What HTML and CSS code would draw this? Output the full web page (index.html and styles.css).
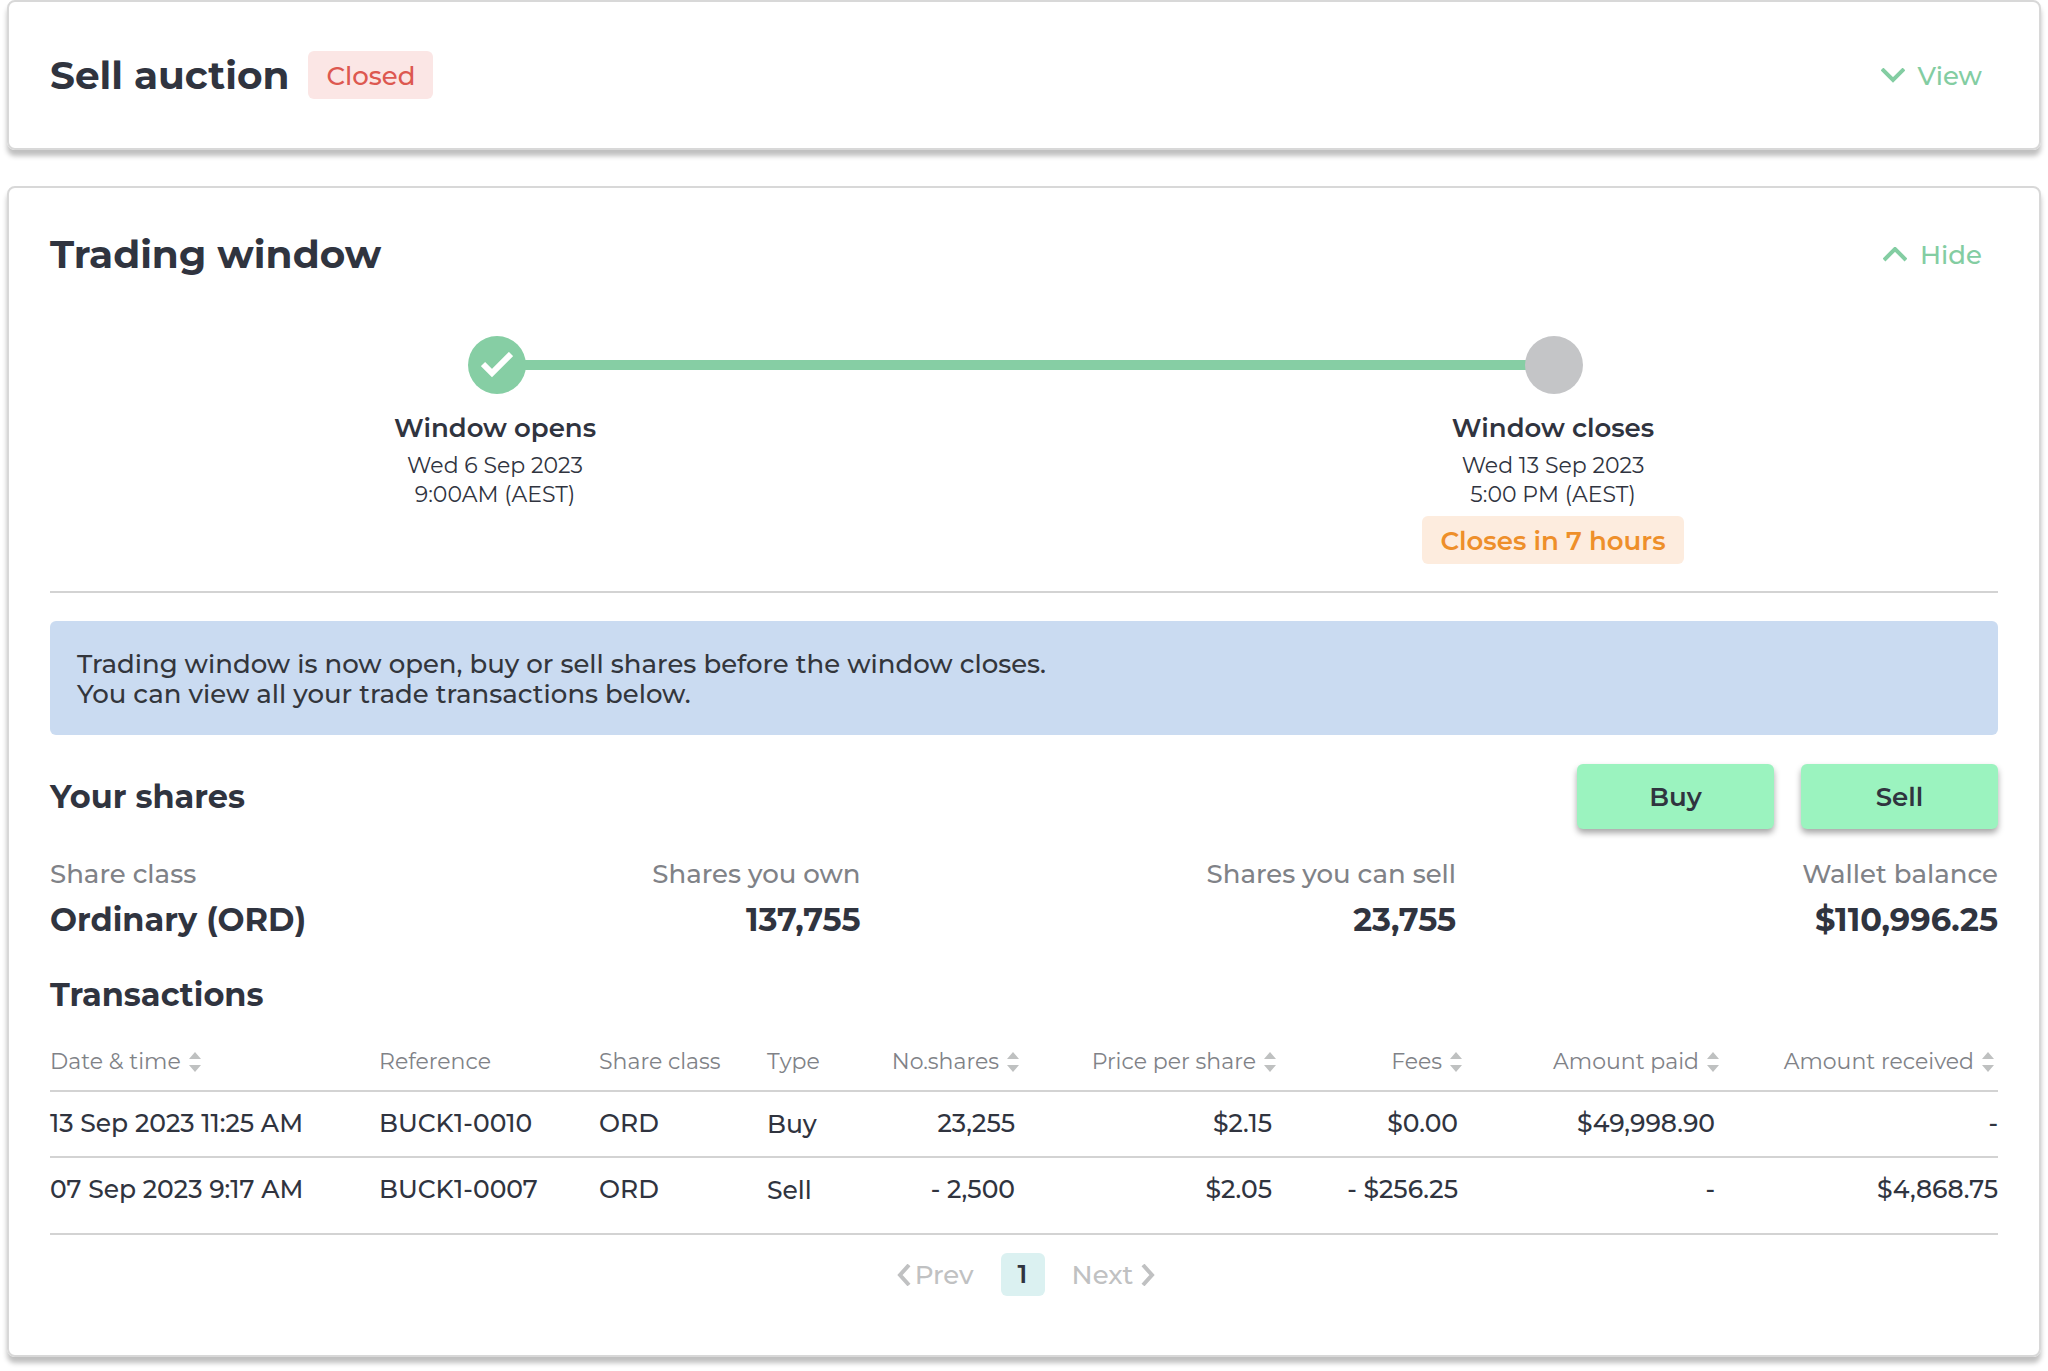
FILE: index.html
```html
<!DOCTYPE html>
<html lang="en">
<head>
<meta charset="utf-8">
<meta name="viewport" content="width=device-width, initial-scale=1">
<title>Trading window</title>
<link rel="stylesheet" href="styles.css">
</head>
<body>
<svg class="defs" width="0" height="0" aria-hidden="true">
  <symbol id="sort" viewBox="0 0 12 20"><path d="M6 0l6 7H0zM6 20l6-7H0z" fill="currentColor"/></symbol>
</svg>
<main class="page">
  <section class="card card-collapsed">
    <header class="card-header">
      <h1 class="title">Sell auction</h1>
      <span class="badge badge-closed">Closed</span>
      <button class="toggle" type="button" aria-expanded="false">
        <svg width="24" height="16" viewBox="0 0 24 16" aria-hidden="true"><path d="M1 1l11 11L23 1" fill="none" stroke="currentColor" stroke-width="4"/></svg>
        View
      </button>
    </header>
  </section>

  <section class="card card-open">
    <header class="card-header">
      <h1 class="title">Trading window</h1>
      <button class="toggle" type="button" aria-expanded="true">
        <svg width="24" height="16" viewBox="0 0 24 16" aria-hidden="true"><path d="M1 13L12 2l11 11" fill="none" stroke="currentColor" stroke-width="4"/></svg>
        Hide
      </button>
    </header>

    <div class="timeline">
      <div class="track">
        <span class="dot dot-done"><svg width="32" height="26" viewBox="0 0 32 26" aria-hidden="true"><path d="M2 12l9 9L30 2" fill="none" stroke="currentColor" stroke-width="6"/></svg></span>
        <span class="line"></span>
        <span class="dot"></span>
      </div>
      <div class="steps">
        <div class="step">
          <h2 class="step-title">Window opens</h2>
          <p class="step-date">Wed 6 Sep 2023<br>9:00AM (AEST)</p>
        </div>
        <div class="step">
          <h2 class="step-title">Window closes</h2>
          <p class="step-date">Wed 13 Sep 2023<br>5:00 PM (AEST)</p>
          <span class="badge badge-closing">Closes in 7 hours</span>
        </div>
      </div>
    </div>

    <p class="notice">Trading window is now open, buy or sell shares before the window closes.<br>You can view all your trade transactions below.</p>

    <div class="shares-header">
      <h2 class="subtitle">Your shares</h2>
      <button class="action" type="button">Buy</button>
      <button class="action" type="button">Sell</button>
    </div>

    <dl class="stats">
      <div class="stat"><dt>Share class</dt><dd>Ordinary (ORD)</dd></div>
      <div class="stat"><dt>Shares you own</dt><dd>137,755</dd></div>
      <div class="stat"><dt>Shares you can sell</dt><dd>23,755</dd></div>
      <div class="stat"><dt>Wallet balance</dt><dd>$110,996.25</dd></div>
    </dl>

    <h2 class="subtitle">Transactions</h2>
    <table class="transactions">
      <colgroup>
        <col class="col-date"><col class="col-ref"><col class="col-class"><col class="col-type"><col class="col-count"><col class="col-price"><col class="col-fees"><col class="col-paid"><col class="col-received">
      </colgroup>
      <thead>
        <tr>
          <th><button class="sort" type="button">Date &amp; time<svg width="12" height="20" aria-hidden="true"><use href="#sort"/></svg></button></th>
          <th>Reference</th>
          <th>Share class</th>
          <th>Type</th>
          <th class="num"><button class="sort" type="button">No.shares<svg width="12" height="20" aria-hidden="true"><use href="#sort"/></svg></button></th>
          <th class="num"><button class="sort" type="button">Price per share<svg width="12" height="20" aria-hidden="true"><use href="#sort"/></svg></button></th>
          <th class="num"><button class="sort" type="button">Fees<svg width="12" height="20" aria-hidden="true"><use href="#sort"/></svg></button></th>
          <th class="num"><button class="sort" type="button">Amount paid<svg width="12" height="20" aria-hidden="true"><use href="#sort"/></svg></button></th>
          <th class="num"><button class="sort" type="button">Amount received<svg width="12" height="20" aria-hidden="true"><use href="#sort"/></svg></button></th>
        </tr>
      </thead>
      <tbody>
        <tr>
          <td>13 Sep 2023 11:25 AM</td><td>BUCK1-0010</td><td>ORD</td><td class="type">Buy</td>
          <td class="num">23,255</td><td class="num">$2.15</td><td class="num">$0.00</td><td class="num">$49,998.90</td><td class="num">-</td>
        </tr>
        <tr>
          <td>07 Sep 2023 9:17 AM</td><td>BUCK1-0007</td><td>ORD</td><td class="type">Sell</td>
          <td class="num">- 2,500</td><td class="num">$2.05</td><td class="num">- $256.25</td><td class="num">-</td><td class="num">$4,868.75</td>
        </tr>
      </tbody>
    </table>

    <nav class="pagination" aria-label="Transactions pages">
      <button class="page-step" type="button" disabled>
        <svg width="14" height="22" viewBox="0 0 14 22" aria-hidden="true"><path d="M12 1L3 11l9 10" fill="none" stroke="currentColor" stroke-width="4"/></svg>Prev
      </button>
      <a class="page-number" href="#" aria-current="page">1</a>
      <button class="page-step page-next" type="button" disabled>
        Next<svg width="14" height="22" viewBox="0 0 14 22" aria-hidden="true"><path d="M2 1l9 10L2 21" fill="none" stroke="currentColor" stroke-width="4"/></svg>
      </button>
    </nav>
  </section>
</main>
</body>
</html>
```
FILE: styles.css
```css
* { box-sizing: border-box; }

body {
  margin: 0;
  background: #fff;
  color: #30343f;
  font-family: Montserrat, Inter, "Liberation Sans", sans-serif;
  font-size: 26px;
  line-height: 30px;
}

h1, h2, p, dl, dd { margin: 0; }

button {
  padding: 0;
  border: 0;
  background: none;
  color: inherit;
  font: inherit;
}

.defs { position: absolute; }

.page {
  display: flex;
  flex-direction: column;
  gap: 36px;
  padding: 0 7px 15px;
}

.card {
  padding: 42px 41px 59px;
  border: 2px solid #d8d8d8;
  border-radius: 8px;
  box-shadow: 0 6px 5px rgba(0, 0, 0, 0.25);
}

.card-collapsed { padding: 49px 41px 49px; }

.card-header {
  display: flex;
  align-items: center;
  gap: 19px;
  padding-right: 16px;
}

.title {
  font-size: 39px;
  font-weight: 700;
  line-height: 48px;
}

.badge {
  padding: 10px 18px 8px;
  border-radius: 6px;
  white-space: nowrap;
}

.badge-closed {
  background: #fbe6e5;
  color: #dd5850;
  font-weight: 500;
}

.badge-closing {
  background: #fdecde;
  color: #ee8f2a;
  font-weight: 600;
}

.toggle {
  display: flex;
  align-items: center;
  gap: 13px;
  margin-left: auto;
  padding-top: 2px;
  color: #83cda2;
  font-weight: 500;
}

.timeline {
  margin-top: 58px;
  padding: 0 316px 27px;
  border-bottom: 2px solid #d3d3d3;
}

.track {
  display: flex;
  align-items: center;
  padding: 0 99px 0 102px;
}

.dot {
  display: flex;
  flex: none;
  align-items: center;
  justify-content: center;
  width: 58px;
  height: 58px;
  border-radius: 50%;
  background: #c4c5c7;
}

.dot-done {
  background: #86cea4;
  color: #fff;
}

.line {
  flex: 1;
  height: 10px;
  margin: 0 -2px;
  background: #86cea4;
}

.steps {
  display: flex;
  justify-content: space-between;
  margin-top: 19px;
}

.step {
  display: flex;
  flex-direction: column;
  align-items: center;
  width: 258px;
}

.step-title {
  font-size: 26px;
  font-weight: 600;
}

.step-date {
  margin: 8px 0 7px;
  font-size: 22px;
  line-height: 29px;
  text-align: center;
}

.notice {
  margin-top: 28px;
  padding: 28px 27px 26px;
  border-radius: 6px;
  background: #cadbf1;
  color: #33363c;
  font-weight: 500;
}

.shares-header {
  display: flex;
  align-items: center;
  gap: 27px;
  margin-top: 29px;
}

.subtitle {
  margin-right: auto;
  font-size: 32px;
  font-weight: 700;
  line-height: 40px;
}

.action {
  width: 197px;
  height: 65px;
  border-radius: 6px;
  background: #9bf3bf;
  box-shadow: 0 4px 6px rgba(0, 0, 0, 0.35);
  font-weight: 600;
}

.stats {
  display: flex;
  justify-content: space-between;
  margin: 30px 0 35px;
}

.stat {
  display: flex;
  flex-direction: column;
  gap: 11px;
  text-align: right;
}

.stat:first-child { text-align: left; }

.stat dt {
  color: #808287;
  font-weight: 500;
}

.stat dd {
  font-size: 32px;
  font-weight: 700;
  line-height: 40px;
}

.transactions {
  width: 100%;
  margin-top: 32px;
  border-collapse: separate;
  border-spacing: 0;
  table-layout: fixed;
}

.col-date { width: 329px; }
.col-ref { width: 220px; }
.col-class { width: 168px; }
.col-type { width: 117px; }
.col-count { width: 135px; }
.col-price { width: 257px; }
.col-fees { width: 186px; }
.col-paid { width: 257px; }
.col-received { width: 279px; }

.transactions th {
  padding: 0 0 13px;
  border-bottom: 2px solid #d3d3d3;
  color: #808287;
  font-size: 22px;
  font-weight: 400;
  text-align: left;
  white-space: nowrap;
}

.transactions td {
  padding: 16px 0 18px;
  border-bottom: 2px solid #d3d3d3;
  font-size: 25px;
  font-weight: 500;
  vertical-align: top;
  white-space: nowrap;
}

.transactions .type {
  padding-top: 17px;
  padding-bottom: 17px;
}

.transactions tr:last-child td { padding-bottom: 29px; }
.transactions tr:last-child .type { padding-bottom: 28px; }

.transactions .num { text-align: right; }
.transactions td.num { padding-right: 4px; }
.transactions th.num:last-child { padding-right: 4px; }
.transactions td.num:last-child { padding-right: 0; }

.sort {
  display: inline-flex;
  align-items: center;
  gap: 8px;
  vertical-align: top;
}

.sort svg { color: #bfc1c1; }

.pagination {
  display: flex;
  align-items: center;
  justify-content: center;
  gap: 27px;
  margin-top: 18px;
  padding-left: 4px;
}

.page-step {
  display: flex;
  align-items: center;
  gap: 4px;
  color: #c0c1c2;
  font-weight: 500;
}

.page-next { gap: 8px; }

.page-number {
  width: 44px;
  padding: 6px 0 7px;
  border-radius: 6px;
  background: #dbf1f1;
  color: inherit;
  font-weight: 600;
  text-align: center;
  text-decoration: none;
}
```
